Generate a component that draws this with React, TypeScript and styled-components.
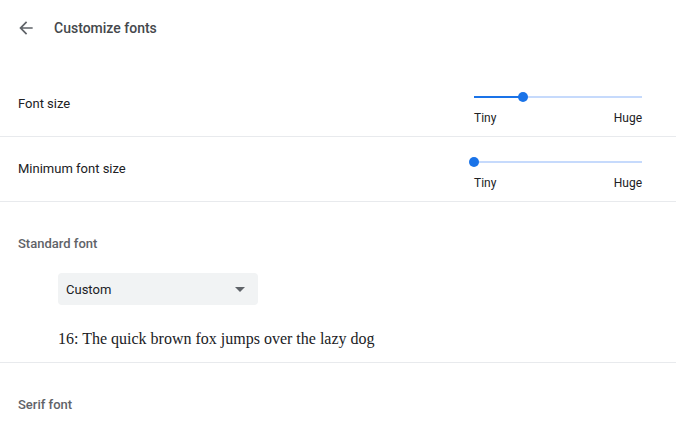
import React from "react";
import styled, { createGlobalStyle } from "styled-components";

const Global = createGlobalStyle`
  html, body { margin: 0; padding: 0; background: #ffffff; }
  body { font-family: Roboto, "Noto Sans", sans-serif; font-size: 13px; color: #202124; }
  * { box-sizing: border-box; }
`;

const Page = styled.div`
  width: 676px;
  display: flex;
  flex-direction: column;
`;

const Header = styled.div`
  height: 56px;
  display: flex;
  align-items: center;
  padding-left: 16px;
  margin-bottom: 16px;
`;

const BackButton = styled.button`
  width: 20px;
  height: 20px;
  padding: 0;
  border: none;
  background: none;
  display: flex;
  align-items: center;
  justify-content: center;
  color: #5f6368;
  margin-right: 18px;
`;

const Title = styled.h1`
  margin: 0;
  font-size: 14px;
  font-weight: 500;
  color: #45484c;
  line-height: 20px;
`;

const Row = styled.div`
  min-height: 65px;
  display: flex;
  align-items: center;
  justify-content: space-between;
  padding: 0 34px 0 18px;
  border-bottom: 1px solid #e8eaed;
`;

const RowLabel = styled.div`
  line-height: 20px;
  color: #202124;
`;

const SliderBox = styled.div`
  width: 168px;
  align-self: flex-start;
  padding-top: 15px;
  display: flex;
  flex-direction: column;
`;

const TrackArea = styled.div`
  position: relative;
  height: 20px;
`;

const Track = styled.div`
  position: absolute;
  left: 0;
  right: 0;
  top: 9px;
  height: 2px;
  background: #c6dafc;
`;

const Fill = styled.div`
  position: absolute;
  left: 0;
  top: 9px;
  height: 2px;
  background: #1a73e8;
`;

const Knob = styled.div`
  position: absolute;
  top: 5px;
  width: 10px;
  height: 10px;
  margin-left: -5px;
  border-radius: 50%;
  background: #1a73e8;
`;

const TickLabels = styled.div`
  margin-top: 3px;
  display: flex;
  justify-content: space-between;
  font-size: 12px;
  line-height: 16px;
  color: #202124;
`;

const Section = styled.div`
  padding: 32px 0 0;
  border-bottom: 1px solid #e8eaed;
`;

const SectionTitle = styled.h2`
  margin: 0;
  padding-left: 18px;
  font-size: 13px;
  font-weight: 500;
  line-height: 20px;
  color: #5f6368;
`;

const SectionBody = styled.div`
  padding: 19px 0 13px 58px;
`;

const Select = styled.div`
  width: 200px;
  height: 32px;
  border-radius: 4px;
  background: #f1f3f4;
  display: flex;
  align-items: center;
  justify-content: space-between;
  padding: 0 8px;
  color: #202124;
`;

const Caret = styled.span`
  width: 0;
  height: 0;
  margin-right: 5px;
  border-left: 5px solid transparent;
  border-right: 5px solid transparent;
  border-top: 5px solid #5f6368;
`;

const Sample = styled.div`
  margin-top: 24px;
  font-family: "Liberation Serif", "Times New Roman", serif;
  font-size: 16px;
  line-height: 20px;
  color: #202124;
`;

function Slider({ value }: { value: number }) {
  const pct = `${value * 100}%`;
  return (
    <SliderBox>
      <TrackArea>
        <Track />
        <Fill style={{ width: pct }} />
        <Knob style={{ left: pct }} />
      </TrackArea>
      <TickLabels>
        <span>Tiny</span>
        <span>Huge</span>
      </TickLabels>
    </SliderBox>
  );
}

export default function App() {
  return (
    <Page>
      <Global />
      <Header>
        <BackButton aria-label="Back">
          <svg width="20" height="20" viewBox="0 0 24 24" fill="currentColor">
            <path d="M20 11H7.83l5.59-5.59L12 4l-8 8 8 8 1.41-1.41L7.83 13H20v-2z" />
          </svg>
        </BackButton>
        <Title>Customize fonts</Title>
      </Header>
      <Row>
        <RowLabel>Font size</RowLabel>
        <Slider value={0.29} />
      </Row>
      <Row>
        <RowLabel>Minimum font size</RowLabel>
        <Slider value={0} />
      </Row>
      <Section>
        <SectionTitle>Standard font</SectionTitle>
        <SectionBody>
          <Select>
            <span>Custom</span>
            <Caret />
          </Select>
          <Sample>16: The quick brown fox jumps over the lazy dog</Sample>
        </SectionBody>
      </Section>
      <Section>
        <SectionTitle>Serif font</SectionTitle>
        <SectionBody />
      </Section>
    </Page>
  );
}
